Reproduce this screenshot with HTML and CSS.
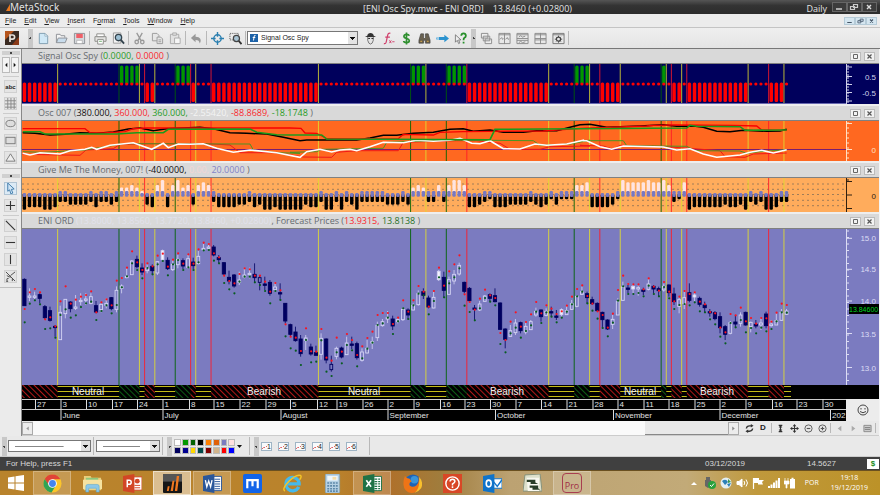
FILE: index.html
```html
<!DOCTYPE html>
<html lang="en">
<head>
<meta charset="utf-8">
<title>MetaStock - ENI Osc Spy</title>
<link rel="stylesheet" href="styles.css">
</head>
<body>
<header class="titlebar">
  <div class="brand"><svg width="4" height="7" viewBox="0 0 4 7"><path d="M0 7 4 0V7z" fill="#e8781e"/></svg>MetaStock</div>
  <div class="doc-title"><span>[ENI Osc Spy.mwc - ENI ORD]</span><span>13.8460 (+0.02800)</span></div>
  <div class="period">Daily</div>
  <div class="win-buttons dark">
    <button aria-label="Minimize"><svg viewBox="0 0 12 8"><path d="M3 6h6" stroke="#ddd" stroke-width="1.4"/></svg></button>
    <button aria-label="Restore"><svg viewBox="0 0 12 8"><path d="M5.500 1.500h4v3h-4zM2.500 3.500h4v3h-4z" stroke="#ccc" stroke-width="1.200" fill="#444"/></svg></button>
    <button aria-label="Close"><svg viewBox="0 0 12 8"><path d="M4 2l4 4M8 2 4 6" stroke="#ddd" stroke-width="1.400"/></svg></button>
  </div>
</header>

<div class="menubar">
  <nav>
    <button><u>F</u>ile</button><button><u>E</u>dit</button><button><u>V</u>iew</button><button><u>I</u>nsert</button><button>F<u>o</u>rmat</button><button><u>T</u>ools</button><button><u>W</u>indow</button><button><u>H</u>elp</button>
  </nav>
  <div class="win-buttons light">
    <button aria-label="Minimize window"><svg viewBox="0 0 12 8"><path d="M3 6h6" stroke="#456" stroke-width="1.400"/></svg></button>
    <button aria-label="Restore window"><svg viewBox="0 0 12 8"><path d="M5.500 1.500h4v3h-4zM2.500 3.500h4v3h-4z" stroke="#567" stroke-width="1.200" fill="#cde"/></svg></button>
    <button aria-label="Close window"><svg viewBox="0 0 12 8"><path d="M4 2l4 4M8 2 4 6" stroke="#456" stroke-width="1.500"/></svg></button>
  </div>
</div>

<div class="toolbar">
  <div class="power"><svg width="14" height="14" viewBox="0 0 14 14"><rect width="14" height="14" fill="#3a2a22"/><path d="M0 0h9L4 5 0 9z" fill="#b5541c"/><path d="M14 14H7l4-5 3-3z" fill="#8a3a18"/><path d="M5 11V4h2.500a2 2 0 0 1 0 4.200H5" fill="none" stroke="#e6e0da" stroke-width="1.700"/></svg></div>
  <span class="grip"></span>
  <button aria-label="New"><svg viewBox="0 0 14 14"><path d="M2.500 1.500h6l3 3v8h-9z" fill="#cfe8f6" stroke="#7d9db0"/><path d="M8.500 1.500v3h3z" fill="#fff" stroke="#7d9db0" stroke-width=".7"/></svg></button>
  <button aria-label="Open"><svg viewBox="0 0 14 14"><path d="M1.500 11.500v-9h4l1 1.500h4v2" fill="#f4f4f4" stroke="#8b8f94"/><path d="M1.500 11.500l2-5h9.500l-2 5z" fill="#c8dcec" stroke="#8b8f94"/></svg></button>
  <button aria-label="Save"><svg viewBox="0 0 14 14"><path d="M1.500 1.500h11v11h-11z" fill="#d5d8dc" stroke="#8b8f94"/><path d="M3.500 2h7v4.500h-7z" fill="#f06068"/><path d="M4 9h6v3.500H4z" fill="#fff" stroke="#999" stroke-width=".6"/></svg></button>
  <i class="sep"></i>
  <button aria-label="Print"><svg viewBox="0 0 14 14"><path d="M1 5h12v5H1z" fill="#e4e4e2" stroke="#8b8b88"/><path d="M3 2h8v3H3z" fill="#fff" stroke="#8b8b88"/><path d="M4 8h6v5H4z" fill="#fff" stroke="#8b8b88"/><path d="M5.500 10h3" stroke="#6a6" /></svg></button>
  <button aria-label="Print preview"><svg viewBox="0 0 14 14"><path d="M1.500 1h8v11h-8z" fill="#f4f4f4" stroke="#999"/><circle cx="7" cy="6" r="3.400" fill="#9cc0d4" stroke="#33434d" stroke-width="1.400"/><path d="M9.500 8.500l3.500 4" stroke="#33434d" stroke-width="2"/></svg></button>
  <i class="sep"></i>
  <button aria-label="Cut"><svg viewBox="0 0 14 14" fill="none" stroke="#999" stroke-width="1.400"><path d="M4 1l4.500 8M10 1 5.500 9"/><circle cx="4" cy="10.800" r="1.900"/><circle cx="10" cy="10.800" r="1.900"/></svg></button>
  <button aria-label="Copy"><svg viewBox="0 0 14 14" fill="#e6e6e6" stroke="#999"><path d="M1.500 1.500h5l2 2v6h-7z"/><path d="M6.500 5.500h4l2 2v5h-6z"/><path d="M8 8.500h3M8 10.500h3"/></svg></button>
  <button aria-label="Paste"><svg viewBox="0 0 14 14" fill="#e2e2e2" stroke="#aaa"><path d="M1.500 2.500h9v10h-9z"/><path d="M4 1h4v2.500H4z"/><path d="M6 6.500h6v6H6z" fill="#f6f6f6"/></svg></button>
  <i class="sep"></i>
  <button aria-label="Undo"><svg viewBox="0 0 14 14"><path d="M1 6.500 6 2v3c5 0 7 3.500 4.500 7.500C10 9.500 9 8.500 6 8.500V11z" fill="#999"/></svg></button>
  <i class="sep"></i>
  <button aria-label="Crosshair"><svg viewBox="0 0 14 14" fill="none" stroke="#2b7fb0" stroke-width="1.500"><circle cx="7" cy="7" r="4"/><path d="M7 0v5M7 9v5M0 7h5M9 7h5"/></svg></button>
  <button aria-label="Zoom box"><svg viewBox="0 0 14 14" fill="none"><path d="M1 1.500h9v7H1z" stroke="#444" stroke-dasharray="1 1"/><circle cx="8" cy="7" r="3.300" fill="#a8c4d4" stroke="#444" stroke-width="1.300"/><path d="M10.500 9.500 13.500 13" stroke="#333" stroke-width="2"/></svg></button>
  <i class="sep"></i>
  <div class="combo">
    <svg width="8" height="8" viewBox="0 0 8 8"><rect width="8" height="8" fill="#1d62a8"/><path d="M5.500 1.500Q4 1 4 3L3.500 6.500M2.700 3.500h2.600" stroke="#fff" fill="none"/></svg>
    <select aria-label="Template"><option>Signal Osc Spy</option></select>
  </div>
  <button aria-label="Expert advisor"><svg viewBox="0 0 14 14"><path d="M4 5h6v4q-1 4-3 4T4 9z" fill="#e4e4e4" stroke="#555" stroke-width=".8"/><path d="M3.500 4Q4 1 7 1t3.500 3l2.500 1.500H1z" fill="#333"/><path d="M4.500 7h2M8 7h2" stroke="#222"/></svg></button>
  <button aria-label="Indicator builder"><svg viewBox="0 0 14 14" fill="none" stroke="#d0406c" stroke-width="1.300"><path d="M9 1.500Q6.500.5 6 4L4.500 11q-.5 2-2.500 1.500M3.500 5.500h5"/><path d="M8 9l2 3M10 9l-2 3M11 10.500h2.500" stroke-width="1"/></svg></button>
  <button aria-label="System tester"><svg viewBox="0 0 14 14" fill="none" stroke="#2f8f2f" stroke-width="1.800"><path d="M10 4Q9.500 2.500 7 2.500T4.200 4.700Q4.200 6.500 7 7t3 2.400Q10 11.500 7 11.500T4 9.800M7 .5v13"/></svg></button>
  <button aria-label="Explorer"><svg viewBox="0 0 14 14" stroke="#444" stroke-width=".7"><path d="M3 2h3v4l1 1 1-1V2h3l2 7v3H8V9H6v3H1V9z" fill="#6a6250"/><path d="M2 9h3v2H2zM9 9h3v2H9z" fill="#e0b050"/></svg></button>
  <button aria-label="Next security"><svg viewBox="0 0 14 14"><path d="M3 5.500h6V3l5 4-5 4V8.500H3z" fill="#2c93cf"/><path d="M0 6h1v2H0zM1.500 5.500h1v3h-1z" fill="#6cb6e0"/></svg></button>
  <button aria-label="Context help"><svg viewBox="0 0 14 14"><path d="M1.500 3v8l2-2 1.500 3.500 1.300-.7L5 8.500h2.500z" fill="#eee" stroke="#666" stroke-width=".8"/><path d="M7.800 4Q8 1.500 10.300 1.500T12.800 4Q12.800 5.500 11 6.500 10.300 7 10.300 9M10.300 10.500v2" fill="none" stroke="#28902c" stroke-width="1.900"/></svg></button>
  <span class="grip"></span>
  <button aria-label="Cascade"><svg viewBox="0 0 14 14" fill="#eee" stroke="#8a8a8a"><path d="M1.500 1.500h7v5h-7zM3.500 4.500h7v5h-7zM5.500 7.500h7v5h-7z"/></svg></button>
  <button aria-label="Tile columns"><svg viewBox="0 0 14 14" fill="none" stroke="#8a8a8a"><path d="M1 1.500h12v11H1zM7 1v12M1 3h12"/><path d="M2 8l2-2 1 2 1-1M8 8l2-2 1 2 1-1"/></svg></button>
  <button aria-label="Tile rows"><svg viewBox="0 0 14 14" fill="none" stroke="#8a8a8a"><path d="M1 1.500h12v11H1zM1 7h12M1 3h12M1 9h12"/><path d="M3 5.500l2-1.500 2 1.500 3-1M3 11.500 5 10l2 1.500 3-1"/></svg></button>
  <button aria-label="Tile grid"><svg viewBox="0 0 14 14" fill="none" stroke="#8a8a8a"><path d="M1 1.500h12v11H1zM7 1v12M1 7h12M1 3h12M1 8.500h12"/></svg></button>
  <button aria-label="Window options"><svg viewBox="0 0 14 14" fill="none" stroke="#777"><path d="M1 1.500h12v11H1zM1 3h12"/><circle cx="7" cy="7.700" r="2.200" stroke="#444" stroke-width="1.300"/><path d="M7 4v1.500M7 10v1.500M3 7.700h1.500M9.500 7.700H11M4.500 5.200l1 1M9.500 10.200l-1-1M9.500 5.200l-1 1M4.500 10.200l1-1" stroke="#444"/></svg></button>
  <i class="sep"></i>
</div>

<div class="workspace">
  <aside class="tools">
    <div class="tool-group">
      <span class="hgrip"></span>
      <div class="arrows"><button aria-label="Previous chart"><svg viewBox="0 0 7 12"><path d="M5 3.500v5L2.500 6z" fill="#111"/></svg></button><button aria-label="Next chart"><svg viewBox="0 0 7 12"><path d="M2 3.500v5L4.500 6z" fill="#111"/></svg></button></div>
      <i class="hsep"></i>
      <button class="tool abc">abc</button>
      <button class="tool" aria-label="Grid"><svg viewBox="0 0 12 12" stroke="#888"><path d="M3 0v12M6.500 0v12M10 0v12M0 3h12M0 6.500h12M0 10h12"/></svg></button>
      <i class="hsep"></i>
      <button class="tool" aria-label="Ellipse"><svg viewBox="0 0 12 12"><ellipse cx="6" cy="6" rx="5" ry="3.500" fill="#ddd" stroke="#777"/></svg></button>
      <button class="tool" aria-label="Rectangle"><svg viewBox="0 0 12 12"><rect x="1" y="2.500" width="10" height="7" fill="#ddd" stroke="#777"/></svg></button>
      <button class="tool" aria-label="Triangle"><svg viewBox="0 0 12 12"><path d="M6 2l5 8H1z" fill="#eee" stroke="#777"/></svg></button>
    </div>
    <div class="tool-group">
      <span class="hgrip"></span>
      <button class="tool active" aria-label="Select"><svg viewBox="0 0 12 12"><path d="M3 0v9l2-1.500L6.500 12l2-1L7 7l3-.5z" fill="#cfe4f4" stroke="#2a6ca0" stroke-width=".9"/></svg></button>
      <button class="tool" aria-label="Crosshair pointer"><svg viewBox="0 0 12 12"><path d="M6 1v10M1 6h10" stroke="#333" stroke-width="1.200"/></svg></button>
      <i class="hsep"></i>
      <button class="tool" aria-label="Trendline"><svg viewBox="0 0 12 12"><path d="M1 1l10 10" stroke="#333" stroke-width="1.200"/></svg></button>
      <button class="tool" aria-label="Horizontal line"><svg viewBox="0 0 12 12"><path d="M1 6h10" stroke="#333" stroke-width="1.200"/></svg></button>
      <button class="tool" aria-label="Vertical line"><svg viewBox="0 0 12 12"><path d="M6 1v10" stroke="#333" stroke-width="1.200"/></svg></button>
      <button class="tool" aria-label="More line studies"><svg viewBox="0 0 12 12" fill="none" stroke="#444"><path d="M1 1l10 10M6 5l5-4M2 5l4 2M4 8Q1.500 8 2 9.500T3 11.500L1 11M8 8v3"/></svg></button>
    </div>
  </aside>

  <main class="charts">
    <section class="panel">
      <div class="panel-head"><h2>Signal Osc Spy (<b class="c-green">0.0000,</b> <b class="c-red">0.0000</b> )</h2></div>
      <div class="row navy h40"><svg id="signal" class="plot" viewBox="22 64 824 40" preserveAspectRatio="none"></svg><svg id="axis1" class="axis" viewBox="0 64 33 40"></svg></div>
    </section>
    <section class="panel">
      <div class="panel-head"><h2>Osc 007 (<b class="c-black">380.000,</b> <b class="c-red">360.000,</b> <b class="c-green">360.000,</b> <b class="c-white">-2.55420,</b> <b class="c-red">-88.8689,</b> <b class="c-green">-18.1748</b> )</h2></div>
      <div class="row orange h40"><svg id="osc" class="plot" viewBox="22 121 824 40" preserveAspectRatio="none"></svg><svg id="axis2" class="axis" viewBox="0 121 33 40"></svg></div>
    </section>
    <section class="panel">
      <div class="panel-head"><h2>Give Me The Money, 007! (<b class="c-black">-40.0000,</b> <b class="c-pink">0.00,</b> <b class="c-blue">20.0000</b> )</h2></div>
      <div class="row peach h34"><svg id="money" class="plot" viewBox="22 178 824 34" preserveAspectRatio="none"></svg><svg id="axis3" class="axis" viewBox="0 178 33 34"></svg></div>
    </section>
    <section class="panel main-panel">
      <div class="panel-head"><h2>ENI ORD <b class="c-lilac">(13.8000, 13.8560, 13.7720, 13.8460, +0.02800)</b>, Forecast Prices (<b class="c-red">13.9315,</b> <b class="c-dgreen">13.8138</b> )</h2></div>
      <div class="row blue grow"><svg id="price" class="plot" viewBox="22 229 824 156" preserveAspectRatio="none"></svg><svg id="axis4" class="axis" viewBox="0 229 33 156" preserveAspectRatio="none"></svg></div>
    </section>
    <div class="row ribbon-row"><svg id="ribbon" class="plot"></svg><span class="pad"></span></div>
    <div class="row dates-row"><svg id="dates" class="plot"></svg>
      <button class="smiley" aria-label="Expert commentary"><svg width="12" height="12" viewBox="0 0 12 12" fill="none" stroke="#444"><circle cx="6" cy="6" r="5"/><path d="M4 4v1.500M8 4v1.500M3 7.500q3 2.500 6 0"/></svg></button>
    </div>
    <div class="scroll-row">
      <button class="sb" aria-label="Scroll left"><svg viewBox="0 0 11 12"><path d="M7 3.500v5L4 6z" fill="#999"/></svg></button>
      <div class="track"><div class="thumb"></div></div>
      <button class="sb" aria-label="Scroll right"><svg viewBox="0 0 11 12"><path d="M4 3.500v5L7 6z" fill="#888"/></svg></button>
      <div class="nav-icons">
        <button aria-label="Refresh"><svg viewBox="0 0 10 10" fill="none" stroke="#333" stroke-width="1.500"><path d="M1.500 5Q2 2 5 2h2M8.500 5Q8 8 5 8H3"/><path d="M6.500 0v4L9.500 2zM3.500 6v4L.5 8z" fill="#333" stroke="none"/></svg></button>
        <button class="day">D</button>
        <i class="sep"></i>
        <button aria-label="Scale vertically"><svg viewBox="0 0 10 10"><path d="M5 1v8M3 1.500h4M3 8.500h4" stroke="#333" stroke-width="1.200"/><path d="M5 1 7 4H3zM5 9l2-3H3z" fill="#333"/></svg></button>
        <button aria-label="Move"><svg viewBox="0 0 10 10" fill="#333"><path d="M5 0l2 2.500H5.600v1.900h1.900V3L10 5 7.500 7V5.600H5.600v1.900H7L5 10 3 7.500h1.400V5.600H2.500V7L0 5l2.500-2v1.400h1.900V2.500H3z"/></svg></button>
        <button aria-label="Zoom out"><svg viewBox="0 0 10 10" fill="none" stroke="#555"><circle cx="5" cy="5" r="4"/><path d="M3 5h4" stroke-width="1.300"/></svg></button>
        <button aria-label="Zoom in"><svg viewBox="0 0 10 10" fill="none" stroke="#555"><circle cx="5" cy="5" r="4"/><path d="M3 5h4M5 3v4" stroke-width="1.300"/></svg></button>
        <i class="sep"></i>
        <button aria-label="Back"><svg viewBox="0 0 10 10"><path d="M7 2v6L3 5z" fill="#aaa"/></svg></button>
        <button aria-label="Forward"><svg viewBox="0 0 10 10"><path d="M3 2v6l4-3z" fill="#aaa"/></svg></button>
        <button aria-label="Data window"><svg viewBox="0 0 10 10"><path d="M1 1.500h8v7H1z" fill="#ccc" stroke="#888"/><path d="M2 6h6M2 4h6" stroke="#777"/></svg></button>
        <i class="sep"></i>
      </div>
    </div>
  </main>
</div>

<div class="bottombar">
  <span class="grip"></span>
  <select class="line-select wide" aria-label="Line style"><option></option></select>
  <i class="sep"></i>
  <select class="line-select" aria-label="Line weight"><option></option></select>
  <i class="sep"></i>
  <span class="grip"></span>
  <div class="palette" id="palette"></div>
  <svg class="caret" width="5" height="3" viewBox="0 0 5 3"><path d="M0 0h5L2.500 3z" fill="#111"/></svg>
  <i class="sep"></i>
  <span class="grip"></span>
  <div class="layouts" id="layouts"></div>
  <i class="sep"></i>
</div>

<footer class="status"><span class="help">For Help, press F1</span><span class="date">03/12/2019</span><span class="value">14.5627</span><span class="money">$</span></footer>

<div class="taskbar">
  <button class="start" aria-label="Start"><svg width="18" height="18" viewBox="0 0 18 18" fill="#fff"><path d="M1 3.500 7.500 2.500V8.500H1zM8.500 2.300 17 1v7.500H8.500zM1 9.500h6.500v6L1 14.500zM8.500 9.500H17V17L8.500 15.700z"/></svg></button>
  <button class="app on" aria-label="Chrome"><svg viewBox="0 0 20 20"><circle cx="10" cy="10" r="9.500" fill="#fbc52b"/><path d="M1.800 5.200A9.500 9.500 0 0 1 18.300 5.500H10L6 12z" fill="#e04437"/><path d="M1.800 5.200A9.500 9.500 0 0 0 9 19.500l4.500-7.300L7 13z" fill="#30a455"/><circle cx="10" cy="10" r="4.600" fill="#fff"/><circle cx="10" cy="10" r="3.600" fill="#4384f0"/></svg></button>
  <button class="app" aria-label="File Explorer"><svg viewBox="0 0 20 20"><path d="M1 2h7l1 2h10v13H1z" fill="#e9ce7c"/><path d="M3 4h13v3H3z" fill="#8dc77c"/><path d="M0 6h20v10H0z" fill="#f6e2a0"/><path d="M3 19v-6q0-2 2-2h10q2 0 2 2v6h-3v-4H6v4z" fill="#8cc8e8" stroke="#5aa6cc" stroke-width=".6"/></svg></button>
  <button class="app" aria-label="PowerPoint"><svg viewBox="0 0 20 20"><path d="M10 3h10v14H10z" fill="#fff" stroke="#d24625"/><path d="M12 12h6M12 14.500h6" stroke="#d24625"/><circle cx="15" cy="7.500" r="2.600" fill="#d24625"/><path d="M0 2l12-2v20L0 18z" fill="#d24625"/><path d="M4.500 14V6.500h2a2 2 0 0 1 0 4.300h-2" fill="none" stroke="#fff" stroke-width="1.600"/></svg></button>
  <button class="app front" aria-label="MetaStock"><svg viewBox="0 0 20 20"><rect width="20" height="20" rx="1" fill="#161616"/><path d="M0 0h20v8H0z" fill="#555"/><path d="M4 18l1-5h2l-1 5zM8 18l2-11h2l-1.500 11zM12.500 18 14.500 2H17l-2 16z" fill="#f07820"/></svg></button>
  <button class="app on" aria-label="Word"><svg viewBox="0 0 20 20"><path d="M10 2.500h9.500v15H10z" fill="#fff" stroke="#2b579a"/><path d="M12 5.500h6M12 8h6M12 10.500h6M12 13h6M12 15.500h6" stroke="#2b579a"/><path d="M0 2l12-2v20L0 18z" fill="#2b579a"/><path d="M2.500 6.500l1.500 7 2-6 2 6 1.500-7" fill="none" stroke="#fff" stroke-width="1.400"/></svg></button>
  <button class="app" aria-label="Maxthon"><svg viewBox="0 0 20 20"><rect width="20" height="20" rx="2" fill="#1264e8"/><path d="M4.500 15V6.500h11V15M10 6.500V13" fill="none" stroke="#fff" stroke-width="2.300"/></svg></button>
  <button class="app" aria-label="Internet Explorer"><svg viewBox="0 0 20 20" fill="none"><path d="M16.500 13.500A7 7 0 1 1 17 9.500v1H5" stroke="#45b9ec" stroke-width="3.400"/><path d="M2 18Q-1.500 16 6 8T18.500 1.500Q20 3 17.500 6" stroke="#f5c426" stroke-width="1.500"/></svg></button>
  <button class="app" aria-label="Calculator"><svg viewBox="0 0 20 20"><rect x="2.500" width="15" height="20" rx="1" fill="#b4d0e4" stroke="#7fa4bd" stroke-width=".7"/><path d="M4.500 2h11v5h-11z" fill="#eef7fc"/><path d="M10 3h4v3h-4z" fill="#f3ddab"/><path d="M4.500 9.500h11M4.500 12.500h11M4.500 15.500h11M4.500 18h11" stroke="#5c87a8" stroke-width="1.700" stroke-dasharray="2 1"/></svg></button>
  <button class="app on" aria-label="Excel"><svg viewBox="0 0 20 20"><path d="M10 2.500h9.500v15H10z" fill="#fff" stroke="#1f7246"/><path d="M12 5.500h6M12 8h6M12 10.500h6M12 13h6M12 15.500h6" stroke="#1f7246" stroke-width="1.300"/><path d="M15.500 4v13" stroke="#fff"/><path d="M0 2l12-2v20L0 18z" fill="#1f7246"/><path d="M3.500 6.500l5 7M8.500 6.500l-5 7" stroke="#fff" stroke-width="1.700"/></svg></button>
  <button class="app" aria-label="Firefox"><svg viewBox="0 0 20 20"><circle cx="10.500" cy="9.500" r="9" fill="#1f63b5"/><circle cx="12" cy="6" r="4" fill="#3a94d8"/><path d="M2 2q2 3 5 3l2 3q-3 1-2 4 3 3 7 0 4-4 2-9 6 6 2 12-4 5-9 5Q1 19 .5 11 .3 6 2 2z" fill="#ee7416"/><path d="M17 3q5 6 2 12-3 4-7 5 6-4 5-17z" fill="#f9c02c"/></svg></button>
  <button class="app" aria-label="Help"><svg viewBox="0 0 20 20"><rect width="20" height="20" fill="#d84726"/><circle cx="10" cy="10" r="7" fill="none" stroke="#fff" stroke-width="1.500"/><path d="M7.500 8Q7.500 5.500 10 5.500T12.500 8Q12.500 9.300 10 10.500V12M10 13v1.800" fill="none" stroke="#fff" stroke-width="1.600"/></svg></button>
  <button class="app" aria-label="Outlook"><svg viewBox="0 0 20 20"><path d="M9 5h11v10H9z" fill="#fff" stroke="#0f73c9"/><path d="M11 8l4 5 5-7" fill="none" stroke="#0f73c9" stroke-width="1.500"/><path d="M0 2l12-2v20L0 18z" fill="#0f73c9"/><ellipse cx="6" cy="10" rx="2.600" ry="3.500" fill="none" stroke="#fff" stroke-width="1.700"/></svg></button>
  <button class="app" aria-label="Charts"><svg viewBox="0 0 20 20"><path d="M2 1l16-1 2 18H0z" fill="#dde0cb" stroke="#83907a"/><path d="M4 4h13v14H5z" fill="#f8f8f0"/><path d="M4 6h9v3l3 1.500H8v-2H4zM7 12h9v3l2 1.500h-8v-2H7z" fill="#283c26"/></svg></button>
  <button class="app on pro" aria-label="Pro"><span>Pro</span></button>
  <div class="tray">
    <svg viewBox="0 0 12 12"><path d="M3 8h6L6 5z" fill="#fff"/></svg>
    <svg viewBox="0 0 12 12"><path d="M2 0h4v3h1v6l-3 2-3-2V3h1z" fill="#666"/><circle cx="8" cy="8" r="4" fill="#28a03c"/><path d="M6 8l1.500 1.500L10 6.500" stroke="#fff" fill="none"/></svg>
    <svg viewBox="0 0 12 12"><circle cx="6" cy="6" r="5.500" fill="#e4eef2"/><path d="M2 4q4-3 6 1L5 8zM7 7l4-1-2 4z" fill="#2c80b8"/><path d="M8 2l3 3-3 1z" fill="#3a9a50"/></svg>
    <svg viewBox="0 0 12 12" fill="none" stroke="#fff"><path d="M1 4.500h2L6 2v8L3 7.500H1z" fill="#fff"/><path d="M8 4q1.500 2 0 4M10 2.500q3 3.500 0 7"/></svg>
    <svg viewBox="0 0 12 12"><path d="M1.500 1v11" stroke="#fff" stroke-width="1.200"/><path d="M2 1h5v2h5L10 5l1 2.500H6V6H2z" fill="#fff"/></svg>
    <svg viewBox="0 0 12 12" fill="#fff"><path d="M0 9h2v2H0zM2.500 7.500h2V11h-2zM5 5.500h2V11H5zM7.500 3.500h2V11h-2zM10 1h2v10h-2z"/></svg>
    <svg viewBox="0 0 12 12"><path d="M1 1v3M4 1v3M0 4h5v3H3v4H2V7H0z" fill="#fff" stroke="#fff" stroke-width=".7"/><path d="M6 2h1.500V.8h2V2H11v9.500H6z" fill="#fff"/></svg>
    <span class="lang">POR</span>
    <span class="clock">19:18<br>19/12/2019</span>
  </div>
</div>
<script src="charts.js"></script>
</body>
</html>
```

FILE: styles.css
```css
* { box-sizing: border-box; }
html, body { margin: 0; }
body {
  min-height: 100vh;
  display: flex;
  flex-direction: column;
  background: #e9e9e9;
  font-family: "Liberation Sans", Arial, sans-serif;
  font-size: 8px;
  line-height: 10px;
  color: #222;
  overflow-x: hidden;
}
button, select { font: inherit; color: inherit; border: 0; padding: 0; margin: 0; background: none; }
svg { display: block; }
h2 { margin: 0; font: inherit; }
b { font-weight: 400; }

.titlebar {
  height: 14px;
  display: flex;
  align-items: center;
  background: linear-gradient(#555, #333 40%, #2c2c2c);
  color: #e4e4e4;
  font-family: "Open Sans", sans-serif;
  font-size: 9px;
  line-height: 14px;
  padding: 0 3px 0 6px;
}
.brand { flex: 7; display: flex; align-items: center; font-size: 10px; font-family: "Noto Sans", sans-serif; }
.doc-title { display: flex; gap: 9px; padding-top: 3px; white-space: nowrap; }
.period { flex: 5; text-align: right; padding: 3px 5px 0 0; }
.win-buttons { display: flex; }
.win-buttons button { width: 15px; height: 10px; border: 1px solid #666; background: #3c3c3c; }
.win-buttons svg { width: 12px; height: 8px; }
.win-buttons.light button { width: 11px; height: 8px; border-color: #b5cbd8; background: #d5e6f0; }
.win-buttons.light svg { width: 9px; height: 6px; }

.menubar {
  height: 14px;
  display: flex;
  align-items: center;
  justify-content: space-between;
  padding: 0 3px 0 5px;
  border-bottom: 1px solid #c4c4c4;
  background: #ececec;
}
.menubar nav { display: flex; gap: 8px; font-size: 7px; }

.toolbar {
  height: 21px;
  display: flex;
  align-items: center;
  background: linear-gradient(#efefef, #e4e4e4);
  border-bottom: 1px solid #777;
}
.toolbar button { width: 18px; height: 18px; display: grid; place-items: center; flex: none; }
.toolbar button svg { width: 13px; height: 13px; }
.power { width: 26px; padding-left: 5px; }
.grip { width: 5px; height: 19px; margin: 0 1px 0 2px; background: radial-gradient(circle, #444 1px, transparent 1px), #c8c8c8; flex: none; }
.sep { width: 1px; height: 14px; margin: 0 1px; background: #b8b8b8; flex: none; }
.combo { display: flex; align-items: center; width: 111px; height: 14px; margin: 0 3px 0 0; background: #fff; border: 1px solid #777; padding-left: 2px; }
.combo select, .line-select { appearance: none; }
.combo select {
  flex: 1;
  height: 12px;
  padding-left: 3px;
  font-size: 7px;
  background: linear-gradient(#111, #111) no-repeat right 2px top 5px / 5px 1px, linear-gradient(#111, #111) no-repeat right 3px top 6px / 3px 1px, linear-gradient(#111, #111) no-repeat right 4px top 7px / 1px 1px, linear-gradient(#e4e4e4, #e4e4e4) no-repeat right / 9px 100%;
}

.workspace { flex: 1; display: flex; }
.tools { width: 22px; border-right: 1px solid #888; background: #ebebeb; }
.tool-group { display: flex; flex-direction: column; align-items: center; gap: 4px; padding: 2px 2px 4px; border-bottom: 1px solid #c0c0c0; margin-bottom: 3px; }
.hgrip { width: 18px; height: 4px; background: radial-gradient(circle, #444 1px, transparent 1px), #d0d0d0; }
.hsep { width: 16px; height: 1px; margin: -1px 0; background: #ccc; }
.arrows { display: flex; gap: 1px; margin-top: -2px; }
.arrows button { width: 8px; height: 16px; border: 1px solid #bbb; background: #f4f4f4; }
.arrows svg { width: 6px; height: 12px; }
.tool { width: 13px; height: 13px; border: 1px solid #d0d0d0; background: #e4e4e4; display: grid; place-items: center; }
.tool svg { width: 11px; height: 11px; }
.tool.abc { font-size: 6px; font-weight: 700; line-height: 8px; }
.tool.active { background: #dceaf5; border-color: #b0c4d4; }

.charts { flex: 1; min-width: 0; display: flex; flex-direction: column; border-right: 1px solid #f4f4f4; }
.panel { border-bottom: 2px solid #eee; }
.main-panel { flex: 1; display: flex; flex-direction: column; border-bottom: 0; }
.panel-head {
  height: 15px;
  display: flex;
  align-items: center;
  padding: 0 4px 0 16px;
  background: #d9d9d9;
  border-bottom: 1px solid #808080;
  font-family: "Open Sans", sans-serif;
  font-size: 9px;
  line-height: 14px;
  color: #666b70;
  white-space: nowrap;
}
.panel-head h2 { flex: 1; }
.panel-head button { width: 11px; height: 9px; margin-left: 3px; border: 1px solid #bbb; background: #f2f2f2; display: grid; place-items: center; }
.panel-head svg { width: 7px; height: 7px; }
.c-green { color: #289c28; }
.c-dgreen { color: #287028; }
.c-red { color: #fa2a30; }
.c-black { color: #111; }
.c-white { color: #f4f4f4; }
.c-pink { color: #f3d6d6; }
.c-blue { color: #8484c8; }
.c-lilac { color: #e2e2ec; }

.row { display: flex; }
.plot { flex: 1; min-width: 0; width: 0; height: 100%; overflow: hidden; }
.axis { flex: none; width: 33px; height: 100%; font-size: 8px; }
.h40 { height: 40px; }
.h34 { height: 34px; }
.grow { flex: 1; min-height: 156px; }
.grow > svg { height: auto; }
.navy { background: #00005c; }
.orange { background: #ff6820; }
.peach { background: #ffac5c; }
.blue { background: #7b7bc0; }

.ribbon-row { height: 14px; background: #000; }
.ribbon-row .pad { width: 33px; }
.ribbon-row text { font-size: 10px; fill: #f0f0f0; }
.dates-row { height: 22px; background: #000; }
.dates-row text { font-size: 8px; fill: #e0e0e0; }
.smiley { width: 33px; background: #ececec; display: grid; place-items: center; }

.scroll-row { height: 15px; display: flex; align-items: center; background: #e9e9e9; border-bottom: 1px solid #ccc; }
.sb { width: 11px; height: 13px; border: 1px solid #aaa; background: #ececec; }
.sb svg { width: 9px; height: 11px; }
.track { flex: 1; height: 14px; background: #fafafa; display: flex; justify-content: flex-end; }
.thumb { width: 12%; background: #e9e9e9; border-bottom: 1px solid #888; }
.nav-icons { display: flex; align-items: center; padding: 0 2px 0 3px; }
.nav-icons button { width: 14px; height: 12px; display: grid; place-items: center; }
.nav-icons svg { width: 9px; height: 9px; }
.nav-icons .sep { height: 10px; }
.nav-icons .day { font-weight: 700; font-size: 8px; }

.bottombar { height: 21px; display: flex; align-items: center; background: #e9e9e9; border-bottom: 1px solid #ccc; }
.bottombar .sep { height: 18px; margin: 0 2px; }
.line-select {
  width: 64px;
  height: 12px;
  border: 1px solid #777;
  background: linear-gradient(#111, #111) no-repeat right 2px top 4px / 5px 1px, linear-gradient(#111, #111) no-repeat right 3px top 5px / 3px 1px, linear-gradient(#111, #111) no-repeat right 4px top 6px / 1px 1px, linear-gradient(#e0e0e0, #e0e0e0) no-repeat right / 9px 100%, linear-gradient(#888, #888) no-repeat 6px 5px / 60% 1px, #fff;
}
.line-select.wide { width: 83px; }
.palette { display: grid; grid-template-columns: repeat(8, 1fr); width: 61px; gap: 1px; margin-left: 1px; }
.palette button { height: 7px; border: 1px solid #bbb; }
.caret { margin: 0 5px 0 2px; }
.layouts { display: flex; gap: 6px; margin: 0 10px 0 1px; }
.layouts button { width: 11px; height: 9px; border: 1px solid #9fb4c4; background: linear-gradient(155deg, transparent 55%, #e46464 56%, #e46464 62%, transparent 63%) left / 5px 100% no-repeat, #f8fafc; font-size: 7px; line-height: 7px; text-align: right; }

.status { height: 13px; display: flex; align-items: center; background: #404040; color: #d8d8d8; padding: 0 1px 0 6px; }
.help { flex: 1; }
.status .date { width: 102px; }
.status .value { width: 60px; }
.status .money { width: 12px; height: 10px; background: #fff; color: #1a8a1a; font-weight: 700; text-align: center; }

.taskbar {
  height: 25px;
  display: flex;
  align-items: center;
  gap: 2px;
  border-top: 1px solid #6a5020;
  background: linear-gradient(90deg, #b9832c 0, #ba832c 38%, #b0702a 44%, #a07c3c 50%, #bca272 58%, #c2aa78 78%, #c0993c 86%, #bc9228 100%);
}
.start { width: 31px; display: grid; place-items: center; }
.app { width: 38px; height: 24px; display: grid; place-items: center; }
.app svg { width: 19px; height: 19px; }
.app.on { background: rgb(255 255 255 / 18%); border: 1px solid rgb(255 255 255 / 25%); }
.app.front { background: rgb(255 255 255 / 48%); border: 1px solid rgb(255 255 255 / 50%); }
.pro span { width: 20px; height: 20px; border: 1px solid #a83e50; border-radius: 4px; color: #a02c44; font: 9px/24px "Open Sans", sans-serif; }
.tray { margin-left: auto; display: flex; align-items: center; gap: 4px; color: #fff; padding-right: 12px; }
.tray svg { width: 12px; height: 12px; }
.lang { margin: 0 8px 0 5px; font: 7px/10px "Open Sans", sans-serif; }
.clock { text-align: center; font: 7px/10px "Open Sans", sans-serif; }
```

FILE: charts.js
```js
const FIRST = 24.4, STEP = 5.115, COUNT = 150, LEFT = 22, WIDTH = 824;
const X = i => FIRST + STEP * i;
const el = id => document.getElementById(id);

// Expert states: start bar and state (N neutral, U bullish, D bearish)
const states = [[0,'D'],[7,'N'],[19,'U'],[23,'N'],[24,'D'],[26,'N'],[30,'U'],[33,'D'],[34,'N'],[37,'D'],[58,'N'],[76,'U'],[79,'N'],[83,'U'],[87,'D'],[103,'N'],[108,'U'],[111,'N'],[113,'D'],[117,'N'],[125,'U'],[126,'N'],[127,'D'],[129,'N'],[130,'D'],[142,'N'],[146,'D'],[149,'N']];
const lineColor = { N: '#e0dc30', U: '#006400', D: '#ff1c28' };
const stateAt = i => states.filter(s => s[0] <= i).pop()[1];

const verticals = (y1, y2, opacity) => states.slice(1).map(([i, s]) =>
  `<path d="M${X(i) - 2.6} ${y1}V${y2}" stroke="${lineColor[s]}" stroke-width="1.1" opacity="${opacity}"/>`).join('');

// Signal panel
let out = verticals(64, 104, 0.75) + '<path d="M22 103.500H846" stroke="#6868b0"/>';
for (let i = 0; i < COUNT; i++) {
  const s = stateAt(i), x = X(i);
  if (s === 'U') out += `<rect x="${x - 1.6}" y="65.500" width="3.400" height="19" rx="1.500" fill="#009600"/>`;
  if (s === 'D') out += `<rect x="${x - 1.7}" y="82.500" width="3.500" height="19.500" rx="1.500" fill="#ff0000"/>`;
  else out += `<circle cx="${x}" cy="84" r="1.600" fill="#ff0000"/>`;
}
el('signal').innerHTML = out;

// Oscillator panel: points are grouped by segment origin
const path = (...segments) => {
  const pts = [];
  segments.forEach(([origin, list]) => {
    for (let k = 0; k < list.length; k += 2) pts.push([origin + list[k] / 3, 100 + list[k + 1] / 3]);
  });
  return pts.map(p => p.map(n => n.toFixed(1)).join(',')).join(' ');
};
const osc = [
  ['#f01818', 1, path([0,[68,163,240,166,258,150,340,146,360,133,430,131,620,131,690,135,720,158,830,158]],[290,[40,171,125,172,140,157,200,152,325,152,340,127,500,122,560,122,630,130,660,148,750,148,780,140,900,138]],[580,[0,136,70,138,100,148,120,136,260,140,420,152,435,170,495,172,520,162,620,159]])],
  ['#4c9424', 1, path([0,[68,155,130,157,255,150,370,131,750,132,760,150,830,158,900,160]],[290,[0,157,80,155,95,148,280,145,290,127,500,120,600,121,730,122,750,136,840,132,900,121]],[580,[0,122,130,122,140,137,320,139,345,152,480,153,500,160,540,155,620,149]])],
  ['#fff', 1.6, path([0,[68,160,90,165,120,158,180,162,210,152,255,148,275,142,290,148,330,136,400,128,455,148,490,130,505,143,535,132,570,133,610,131,650,145,700,157,750,150,830,158,900,172]],[290,[30,172,50,155,90,148,125,156,150,150,180,148,200,152,240,140,280,127,340,128,380,121,430,124,480,121,510,115,545,130,570,131,600,122,640,146,690,147,735,132,770,136,830,132,880,121]],[580,[10,122,20,122,60,140,95,148,130,138,250,141,290,150,330,146,370,162,410,172,450,168,480,165,510,157,545,151,580,159,620,149]])],
  ['#000', 1.5, path([0,[68,98,105,100,150,105,195,103,240,98,290,100,340,96,385,87,420,84,460,92,500,86,550,84,600,82,640,86,690,98,740,100,800,102,850,112,900,122]],[290,[50,120,100,120,200,120,240,114,280,106,320,106,370,100,430,97,480,88,520,86,550,94,600,90,640,97,700,97,740,92,800,92,840,82,870,74]],[580,[0,74,30,73,80,82,120,80,180,78,250,74,290,79,340,78,370,82,410,94,450,95,490,91,560,94,600,93,620,88]])],
  ['#f80000', 1.3, path([0,[68,86,255,86,270,98,310,99,375,95,400,86,440,84,870,84]],[290,[33,85,45,99,80,100,110,116,240,117,325,116,340,103,430,105,450,97,520,95,600,94,760,93,830,88]],[580,[0,85,200,78,220,76,280,75,460,76,530,78,545,90,620,91]])],
  ['#1c9a1c', 1.6, path([0,[68,95,120,95,135,102,350,102,410,98,490,98,505,88,750,87,770,97,830,104]],[290,[0,105,95,105,110,117,600,119,615,88,870,86]],[580,[0,86,320,84,330,76,350,79,480,80,495,91,620,90]])]
];
el('osc').innerHTML = verticals(121, 161, 0.8) + '<path d="M22 149.500H846" stroke="#7a1c70"/>' +
  osc.map(([c, w, p]) => `<polyline points="${p}" fill="none" stroke="${c}" stroke-width="${w}"/>`).join('');

// Money panel: negative levels hang below zero, positive rise above
const money = [-5,-4,-4,-4,-5,-5,-4,-2,-2,-3,-3,-3,-3,-2,-4,-2,-2,-3,-2,2,2,3,2,1,-3,-4,3,5,-4,3,5,2,3,-3,3,4,3,-2,-4,-4,-4,-4,-3,-3,-2,-4,-3,-5,-5,-4,-5,-5,-5,-5,-5,-3,-4,-4,-2,-5,-5,-2,-5,-2,-3,-5,-2,-2,-2,-2,-2,-3,-3,-3,-2,-3,2,3,2,-2,-2,3,-2,3,5,5,3,-4,-4,-3,-2,-1,-4,-4,-4,-3,-3,-3,-3,-2,-3,-4,-3,-1,-3,-1,-1,-1,3,3,4,-4,-4,-4,-4,-3,-1,5,4,4,4,4,5,4,4,5,3,-2,-1,4,-5,-4,-4,-4,-4,-4,-4,-3,-4,-4,-3,-5,-2,-3,-2,-5,-5,-4,-2,-2];
const down = [0, 199.3, 202, 204.7, 207.3, 209.7], up = [0, 191, 187.5, 185, 182.3, 180];
const bar = (x, y1, y2, c) => `<rect x="${x - 1.7}" y="${y1}" width="3.400" height="${(y2 - y1).toFixed(1)}" rx="1.300" fill="${c}"/>`;
out = [184, 189.3, 194.5, 200.3, 205.7].map(y => `<path d="M22 ${y}H846" stroke="#a07c58" stroke-dasharray="2 3"/>`).join('') + verticals(178, 212, 0.8);
money.forEach((v, i) => {
  const x = X(i), high = v > 1 || (v > -3 && v < 0);
  if (v < 0) out += bar(x, 194, down[-v], '#000'); else out += bar(x, up[v], 195, '#ffe4e0');
  out += bar(x, high ? 191 : 193, v < 0 ? 197 : 196.7, '#7878c0');
});
el('money').innerHTML = out;

// Candles: kind, body top, body bottom, high, low, forecast high, forecast low
const candles = `d163,242,160,242,252,292 w213,217,190,228,202,236 w213,217,200,222,192,226 d209,220,205,235,202,238 d245,278,240,282,283,312 d257,286,245,290,277,310 d304,308,300,335,304,338 w262,344,242,344,229,270 w223,266,223,280,184,253 d231,251,229,262,236,278
w246,250,210,255,224,271 w226,230,205,240,215,246 w222,226,205,240,210,235 w215,235,205,238,199,230 d242,261,228,265,262,285 w238,254,235,262,232,258 w235,241,220,250,223,241 d218,251,216,256,241,265 w196,253,184,262,167,240 w183,190,178,205,159,187
w154,158,130,160,128,154 w108,149,105,150,79,115 d103,125,92,130,112,135 d129,141,115,150,135,160 w129,137,118,145,115,129 d124,137,118,148,124,148 w110,144,108,150,92,118 W77,104,74,108,86,108 d106,131,97,135,125,151 w118,134,105,138,104,118
w103,119,90,130,85,105 d107,123,100,132,116,135 w101,127,90,130,88,127 d111,122,98,132,116,135 w94,116,78,118,73,112 w70,74,57,78,53,76 w66,70,55,75,57,75 d66,90,60,94,85,107 d98,104,90,115,97,115 d113,147,112,150,152,174
d157,168,137,178,168,193 d150,183,147,188,175,205 w165,172,140,180,147,170 w150,156,128,160,130,155 w145,149,128,160,133,155 d148,158,115,172,152,172 h158,172,150,196,152,180 d177,181,155,195,170,198 d172,205,165,212,200,235 w186,194,172,200,174,198
d203,207,175,225,196,225 d235,288,234,295,298,334 d299,328,296,335,335,370 d321,347,305,350,338,377 d342,386,330,395,378,420 w339,346,330,375,310,345 d366,387,356,392,379,412 d383,391,362,391,380,410 w340,388,325,404,312,346 d342,405,340,415,398,440
h418,434,392,440,407,453 w370,394,365,403,338,382 d369,396,365,400,380,415 w354,389,335,390,327,360 d357,361,335,372,345,376 d356,398,350,404,390,424 w381,406,370,410,364,400 w370,384,345,385,339,371 w350,354,335,372,320,353 w301,338,290,348,270,300
w290,302,282,305,264,295 w278,282,258,294,264,278 d282,303,272,315,297,327 w284,289,280,295,278,289 w253,284,248,288,226,250 d255,270,250,284,260,282 w241,255,235,256,226,241 w206,239,196,242,183,206 d200,211,190,222,200,211 d219,246,212,250,245,268
w217,249,200,250,198,228 W139,164,135,168,128,157 d157,196,140,218,182,217 w164,208,155,210,139,175 w148,168,135,178,118,157 w121,147,113,152,91,130 d172,199,170,205,208,242 d190,227,186,230,231,261 d249,253,240,285,254,286 w237,255,228,258,221,250
w213,229,210,230,194,219 d209,220,205,228,211,230 d212,230,190,232,219,241 d234,313,232,315,324,357 d312,343,310,370,345,382 w317,334,300,336,290,325 w294,323,282,330,262,308 d293,317,290,325,305,338 w304,321,290,328,291,318 w290,314,285,315,268,301
w259,270,248,275,231,260 d255,275,253,290,265,294 w259,271,250,274,241,262 d260,264,245,275,251,275 d273,277,255,285,267,292 W254,269,250,278,259,278 w257,269,240,270,242,260 w236,253,225,255,215,238 w214,244,210,247,192,214 w200,208,185,210,181,200
d206,218,200,235,213,235 d224,236,215,240,236,257 d235,257,232,260,259,281 d262,284,260,308,270,309 d285,312,283,315,308,334 w283,298,270,312,266,293 w230,270,220,270,195,227 w186,226,170,228,152,184 d189,193,180,205,177,207 W184,192,178,205,178,207
w188,192,182,212,178,204 d195,199,188,210,193,214 w177,193,163,196,160,182 d184,192,180,205,185,207 d191,197,185,215,197,214 w184,195,176,200,171,186 d180,203,178,215,200,220 d207,230,188,240,229,252 w224,244,218,265,215,240 w218,236,200,252,198,237
d203,226,175,232,207,241 W210,216,200,228,202,232 d220,238,215,245,230,259 d240,248,230,262,238,262 d260,264,252,275,261,283 d263,281,258,286,265,298 d275,308,262,325,308,335 d305,328,300,345,322,355 w293,325,288,328,267,294 d291,297,270,308,271,307
w270,295,262,305,248,285 d262,300,260,302,289,322 w292,305,290,322,279,309 d298,303,285,310,296,325 w294,300,280,315,279,308 d267,302,260,310,280,319 w297,302,285,305,290,312 w287,300,265,300,263,289 w262,286,252,288,236,262 w258,268,252,270,240,263`.split(/\s+/);
out = verticals(229, 385, 0.8);
candles.forEach((c, i) => {
  const kind = c[0], [t, b, h, l, r, g] = c.slice(1).split(',').map(n => 225 + n / 3), x = X(i);
  const color = kind === 'd' || kind === 'h' ? '#000060' : '#d4d4f4';
  const fill = kind === 'd' ? color : kind === 'W' ? '#f4f4ff' : '#7b7bc0';
  const half = kind === 'd' ? 1.6 : 1.4;
  out += `<path d="M${x} ${h}V${l}" stroke="${color}" stroke-width=".8"/><rect x="${x - half}" y="${t}" width="${half * 2}" height="${Math.max(b - t, 1)}" fill="${fill}" stroke="${color}" stroke-width=".9"/>` +
    `<circle cx="${x + .3}" cy="${r}" r="1.100" fill="#fa1420"/><circle cx="${x + .3}" cy="${g}" r="1.100" fill="#085c20"/>`;
});
el('price').innerHTML = out;

// Value axes
const tick = (y, len, c) => `<path d="M1 ${y}h${len}" stroke="${c}"/>`;
const label = (y, t, c) => `<text x="30" y="${y + 3}" text-anchor="end" fill="${c}">${t}</text>`;
const axis = (id, y1, y2, c, step, major, labels) => {
  let s = `<path d="M.5 ${y1}V${y2}" stroke="${c}"/>`;
  for (let y = y1 + 2; y < y2; y += step) s += tick(y, 2, c);
  major.forEach(y => s += tick(y, 5, c));
  labels.forEach(([y, t]) => s += label(y, t, c));
  el(id).innerHTML = s;
};
axis('axis1', 64, 104, '#d0d0ea', 3, [67, 76.5, 84.5, 92.5, 101], [[76.5, '0.5'], [92.5, '-0.5']]);
axis('axis2', 121, 161, '#ffe0c4', 5, [123.5, 149.5], [[150, '0']]);
axis('axis3', 178, 212, '#302010', 50, [181.5, 195, 208.5], [[195.5, '0']]);
axis('axis4', 229, 385, '#dcdcf4', 6.5, [238.3, 269.3, 301, 333.5, 367.5], [[238.3, '15.0'], [269.3, '14.5'], [301, '14.0'], [333.5, '13.5'], [367.5, '13.0']]);
el('axis4').innerHTML += '<rect x="3" y="304" width="30" height="10" fill="#000"/><text x="3" y="311.500" font-size="7" fill="#00d820">13.84600</text>';

// Expert ribbon
const pct = x => ((x - LEFT) / WIDTH * 100).toFixed(3) + '%';
out = `<defs>${[['hd', '#b01818'], ['hu', '#0c5c14']].map(([id, c]) => `<pattern id="${id}" width="4" height="4" patternUnits="userSpaceOnUse" patternTransform="rotate(-45)"><path d="M.5 0V4" stroke="${c}" stroke-width="1"/></pattern>`).join('')}</defs>`;
states.forEach(([i, s], k) => {
  const a = k ? X(i) - 2.6 : 22, b = k + 1 < states.length ? X(states[k + 1][0]) - 2.6 : 791;
  if (s === 'N') out += [1, 6, 11].map(y => `<rect x="${pct(a)}" y="${y}" width="${pct(b - a + LEFT)}" height="1" fill="#c4bc18"/>`).join('');
  else out += `<rect x="${pct(a)}" y="0" width="${pct(b - a + LEFT)}" height="13" fill="url(#${s === 'D' ? 'hd' : 'hu'})"/>`;
});
[[88, 'Neutral'], [264, 'Bearish'], [364, 'Neutral'], [507, 'Bearish'], [640, 'Neutral'], [717, 'Bearish']].forEach(([x, t]) =>
  out += `<text x="${pct(x)}" y="10" text-anchor="middle">${t}</text>`);
el('ribbon').innerHTML = out;

// Date axis
const weeks = [[35,27],[60.5,3],[86,10],[112,17],[137,24],[162.5,1],[189,8],[213.5,15],[239.5,22],[265.5,29],[290,5],[317,12],[336.5,19],[362.5,26],[387.5,2],[413.5,9],[440,16],[464.5,23],[490,30],[515.5,7],[541,14],[566.5,21],[592.5,28],[617.5,4],[643.5,11],[668.5,18],[694.5,25],[719.5,2],[745.5,9],[772,16],[796.5,23],[822.5,30]];
const months = [[60.5,'June'],[162.5,'July'],[280.5,'August'],[387.5,'September'],[495,'October'],[613,'November'],[719.5,'December'],[830,'202']];
out = '<rect width="100%" height="1" fill="#ccc"/><rect y="10" width="100%" height="1" fill="#ccc"/>';
const mark = (x, y, h, t) => `<rect x="${pct(x)}" y="${y}" width="1" height="${h}" fill="#ddd"/><text x="${pct(x + 2)}" y="${y + 8}">${t}</text>`;
weeks.forEach(([x, t]) => out += mark(x, 0, 10, t));
months.forEach(([x, t]) => out += mark(x, 11, 10, t));
el('dates').innerHTML = out;

// Pane controls, palette and layout buttons
document.querySelectorAll('.panel-head').forEach(h => h.insertAdjacentHTML('beforeend',
  '<button aria-label="Maximize pane"><svg viewBox="0 0 7 7"><path d="M1.500 1.500h4v4h-4z" fill="none" stroke="#666"/></svg></button><button aria-label="Close pane"><svg viewBox="0 0 7 7"><path d="M1.500 1.500l4 4M5.500 1.500l-4 4" stroke="#555" stroke-width="1.200"/></svg></button>'));
el('palette').innerHTML = ['#fff', '#009800', '#006000', '#000', '#ff8000', '#e06008', '#7b7bc0', '#ffe0e0', '#000060', '#000090', '#ffd800', '#004848', '#800000', '#d2b48c', '#ff0000', '#0000ff']
  .map(c => `<button aria-label="Color ${c}" style="background:${c}"></button>`).join('');
el('layouts').innerHTML = [1, 2, 3, 4, 5, 6].map(n => `<button>${n}</button>`).join('');
```
